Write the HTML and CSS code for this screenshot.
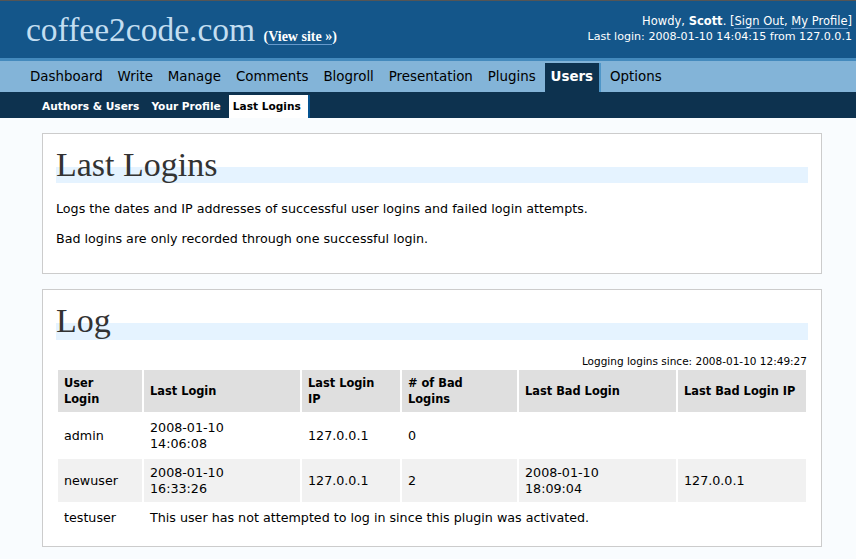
FILE: index.html
```html
<!DOCTYPE html>
<html>
<head>
<meta charset="utf-8">
<title>Last Logins</title>
<link rel="stylesheet" href="styles.css">
</head>
<body>
<div class="wphead">
  <h1 class="blogname">coffee2code.com <span class="viewsite"><span class="paren">(</span><a href="#">View site &raquo;</a><span class="paren">)</span></span></h1>
  <div class="userinfo">
    <div class="howdy">Howdy, <strong>Scott</strong>. [<a href="#">Sign Out</a>, <a href="#">My Profile</a>]</div>
    <div class="lastlogin">Last login: 2008-01-10 14:04:15 from 127.0.0.1</div>
  </div>
</div>
<ul class="adminmenu">
  <li><a href="#">Dashboard</a></li>
  <li><a href="#">Write</a></li>
  <li><a href="#">Manage</a></li>
  <li><a href="#">Comments</a></li>
  <li><a href="#">Blogroll</a></li>
  <li><a href="#">Presentation</a></li>
  <li><a href="#">Plugins</a></li>
  <li><a href="#" class="current">Users</a></li>
  <li><a href="#">Options</a></li>
</ul>
<ul class="submenu">
  <li><a href="#">Authors &amp; Users</a></li>
  <li><a href="#">Your Profile</a></li>
  <li><a href="#" class="current">Last Logins</a></li>
</ul>

<div class="wrap">
  <h2>Last Logins</h2>
  <p>Logs the dates and IP addresses of successful user logins and failed login attempts.</p>
  <p>Bad logins are only recorded through one successful login.</p>
</div>

<div class="wrap">
  <h2 class="log">Log</h2>
  <div class="since">Logging logins since: 2008-01-10 12:49:27</div>
  <table class="widefat">
    <colgroup>
      <col class="c1"><col class="c2"><col class="c3"><col class="c4"><col class="c5"><col class="c6">
    </colgroup>
    <thead>
      <tr>
        <th>User<br>Login</th>
        <th>Last Login</th>
        <th>Last Login<br>IP</th>
        <th># of Bad<br>Logins</th>
        <th>Last Bad Login</th>
        <th>Last Bad Login IP</th>
      </tr>
    </thead>
    <tbody>
      <tr>
        <td>admin</td>
        <td>2008-01-10<br>14:06:08</td>
        <td>127.0.0.1</td>
        <td>0</td>
        <td></td>
        <td></td>
      </tr>
      <tr class="alternate">
        <td>newuser</td>
        <td>2008-01-10<br>16:33:26</td>
        <td>127.0.0.1</td>
        <td>2</td>
        <td>2008-01-10<br>18:09:04</td>
        <td>127.0.0.1</td>
      </tr>
      <tr class="short">
        <td>testuser</td>
        <td colspan="5">This user has not attempted to log in since this plugin was activated.</td>
      </tr>
    </tbody>
  </table>
</div>
</body>
</html>
```
FILE: styles.css
```css
html, body {
  margin: 0;
  padding: 0;
}
body {
  background: #f9fcfe;
  font-family: "DejaVu Sans", Verdana, sans-serif;
  font-size: 12.7px;
  color: #000;
}
a {
  color: inherit;
  text-decoration: none;
}

/* header */
.wphead {
  background: #14568a;
  border-top: 1px solid #555;
  height: 57px;
  display: flex;
  justify-content: space-between;
  align-items: flex-start;
}
.blogname {
  margin: 10px 0 0 26px;
  font-family: "Liberation Serif", "Times New Roman", serif;
  font-size: 33.5px;
  font-weight: normal;
  color: #c3def1;
  line-height: 38px;
  white-space: nowrap;
}
.viewsite {
  font-size: 14px;
  font-weight: bold;
  color: #fff;
}
.viewsite a {
  border-bottom: 1px solid #69c;
}
.userinfo {
  margin: 12px 4px 0 0;
  text-align: right;
  color: #fff;
}
.howdy {
  font-size: 11.5px;
  line-height: 16px;
}
.howdy a {
  border-bottom: 1px solid #69c;
}
.lastlogin {
  font-size: 11.1px;
  line-height: 15px;
}

/* admin menu */
.adminmenu {
  list-style: none;
  margin: 0;
  padding: 2px 0 0 24px;
  height: 29px;
  background: #83b4d8;
  border-top: 3px solid #448abd;
  display: flex;
  gap: 2.9px;
}
.adminmenu a {
  display: block;
  height: 29px;
  line-height: 27px;
  padding: 0 6px;
  font-size: 13.4px;
  color: #000;
}
.adminmenu a.current {
  background: #0d324f;
  border-right: 2px solid #4f96c8;
  color: #fff;
  font-weight: bold;
  padding-right: 6px;
}

/* submenu */
.submenu {
  list-style: none;
  margin: 0;
  padding: 3px 0 0 38px;
  height: 23px;
  background: #0d324f;
  display: flex;
  gap: 4px;
}
.submenu a {
  display: block;
  height: 23px;
  line-height: 22px;
  padding: 0 4px;
  font-size: 10.6px;
  font-weight: bold;
  color: #fff;
}
.submenu a.current {
  background: #fff;
  color: #000;
  border-right: 2px solid #045290;
  padding-right: 7px;
}

/* content boxes */
.wrap {
  background: #fff;
  border: 1px solid #ccc;
  margin: 15px 34px 15px 42px;
  padding: 13px;
}
.wrap h2 {
  font-family: "Liberation Serif", "Times New Roman", serif;
  font-size: 34px;
  font-weight: normal;
  line-height: 5px;
  height: 5px;
  color: #333;
  border-bottom: 16px solid #e5f3ff;
  margin: 15px 0 17px;
  padding: 0;
}
.wrap h2.log {
  margin: 15px 0 15px;
  border-bottom-width: 17px;
}
.wrap p {
  margin: 12px 0;
  line-height: 18px;
}
.since {
  text-align: right;
  font-size: 10.5px;
  line-height: 13px;
  padding-right: 1px;
}

/* table */
.widefat {
  table-layout: fixed;
  border-spacing: 2px;
  width: 100%;
}
.c1 { width: 84px; }
.c2 { width: 156px; }
.c3 { width: 98px; }
.c4 { width: 115px; }
.c5 { width: 157px; }
.c6 { width: 128px; }
.widefat th {
  background: #dfdfdf;
  text-align: left;
  font-weight: bold;
  font-size: 11.4px;
  line-height: 16px;
  padding: 5px 6px;
  height: 32px;
  white-space: nowrap;
}
.widefat td {
  line-height: 16px;
  padding: 5px 6px;
  height: 33px;
  vertical-align: middle;
}
.widefat tr.short td {
  height: 17px;
}
.widefat tr.alternate td {
  background: #f1f1f1;
}
```
